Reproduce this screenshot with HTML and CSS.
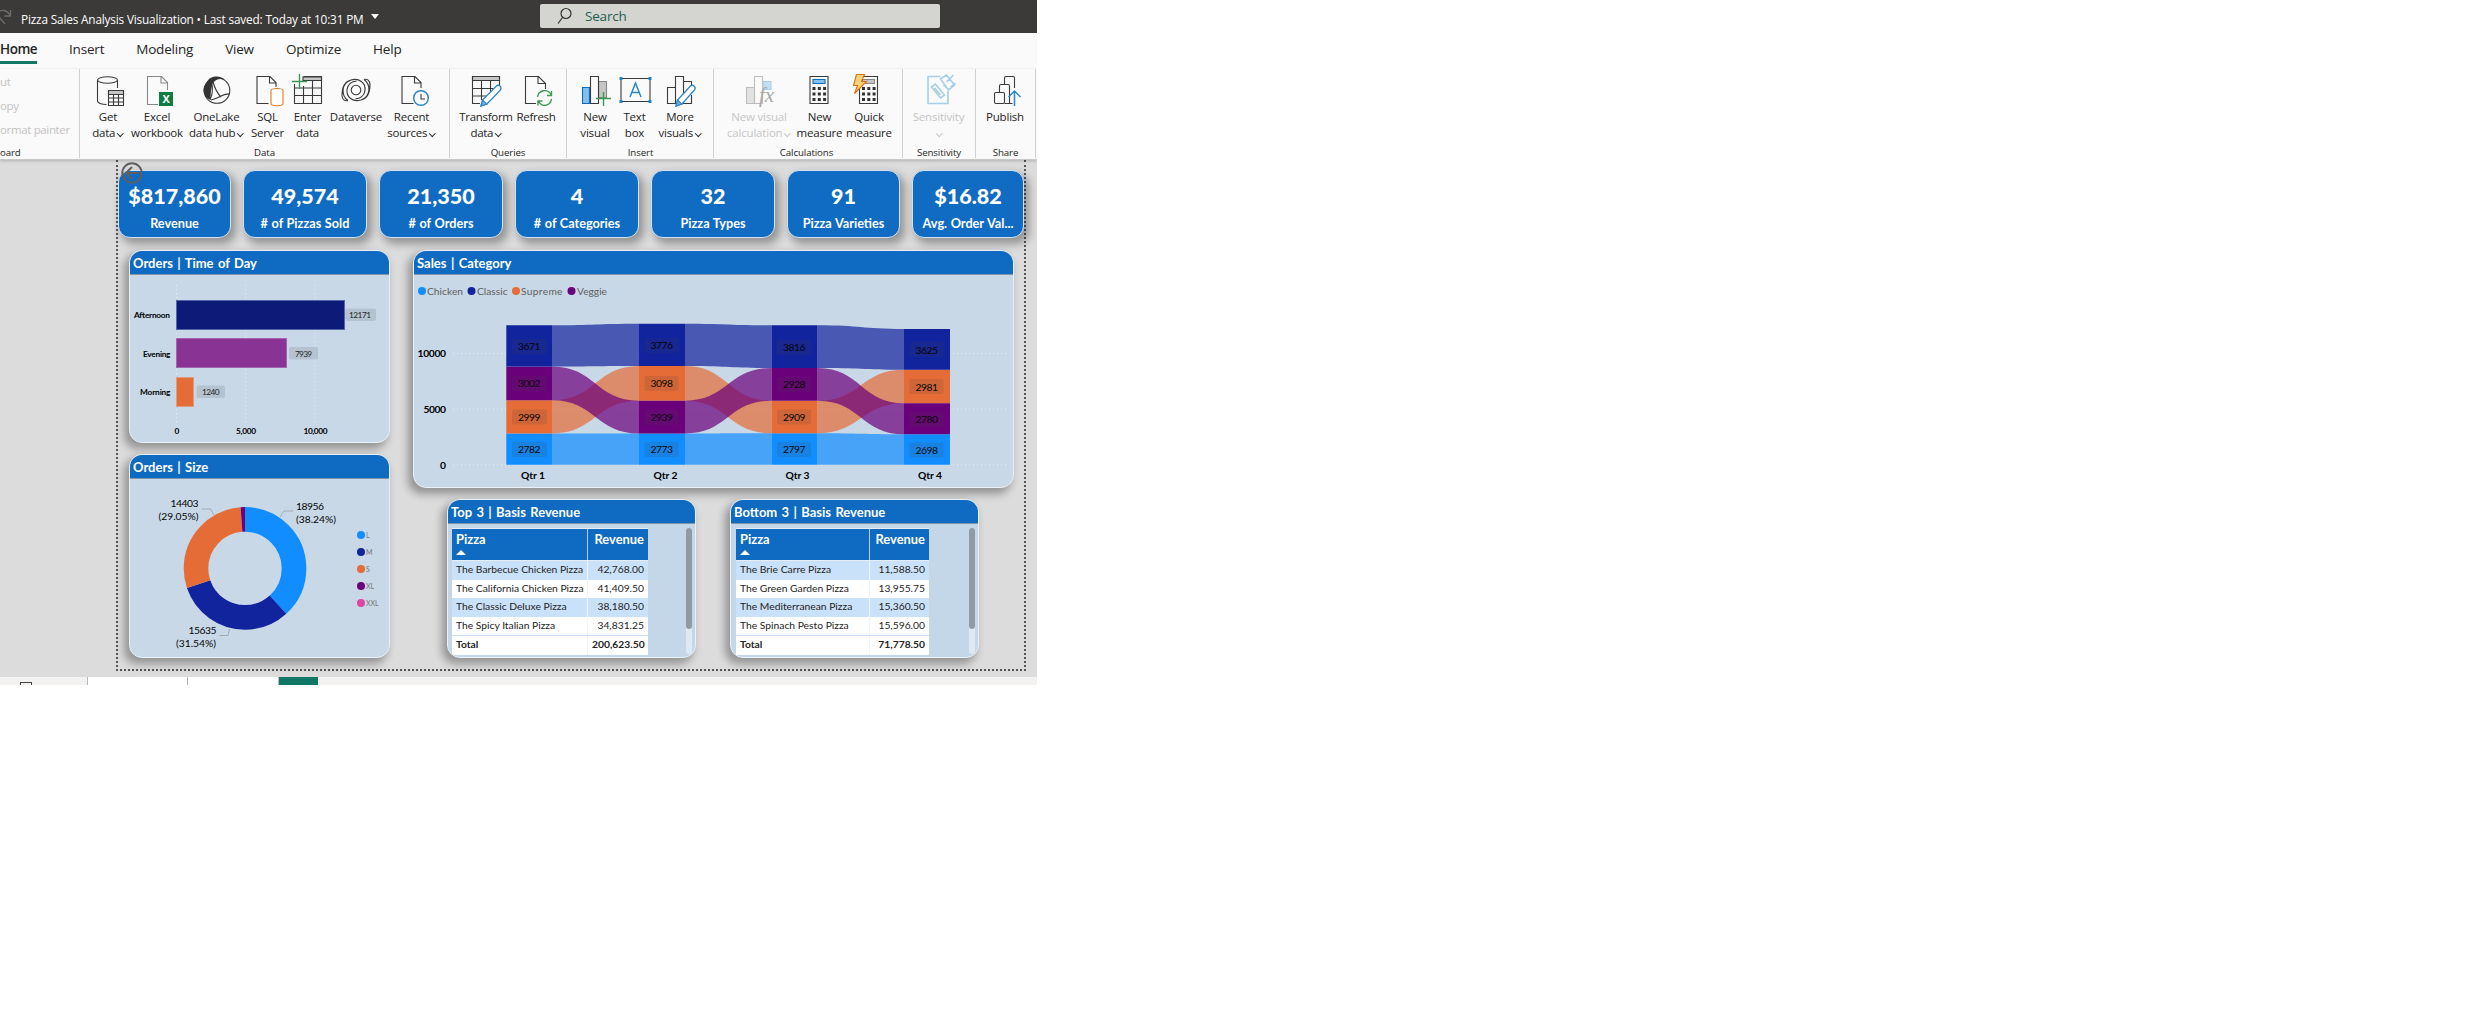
FILE: index.html
```html
<!DOCTYPE html>
<html lang="en">
<head>
<meta charset="utf-8">
<title>Pizza Sales Analysis Visualization</title>
<link rel="stylesheet" href="styles.css">
</head>
<body>
<div class="app">
  <header class="titlebar">
    <svg class="redo" width="12" height="18" viewBox="0 7 12 18"><path d="M10.500 10v6h-6M10 15C7 10 2 9 -2 12M-1 17l6 7"/></svg>
    <span class="doc">Pizza Sales Analysis Visualization • Last saved: Today at 10:31 PM</span>
    <i class="caret"></i>
    <div class="search">
      <svg width="16" height="18" viewBox="0 0 16 18"><circle cx="9" cy="6.500" r="5"/><path d="M5.500 10.500L1 16.500"/></svg>
      <span>Search</span>
    </div>
  </header>

  <nav class="tabs">
    <span class="tab active">Home</span><span class="tab">Insert</span><span class="tab">Modeling</span><span class="tab">View</span><span class="tab">Optimize</span><span class="tab">Help</span>
  </nav>

  <div class="ribbon">
    <section class="group clip">
      <div class="clip-items"><span>ut</span><span>opy</span><span>ormat painter</span></div>
      <div class="gname">oard</div>
    </section>

    <section class="group data">
      <div class="btns">
        <div class="btn w40"><svg viewBox="93 75 30 32"><ellipse cx="107.500" cy="80" rx="10" ry="3.300"/><path d="M97.500 80v21c0 2 4 3.500 9 3.500M117.500 80v8"/><path class="fg" d="M108.500 90.500h15v4h-15z"/><path d="M108.500 90.500h15v15h-15zM108.500 94.500h15M108.500 98h15M108.500 102h15M113.500 94.500v11M118.500 94.500v11"/></svg><span>Get</span><span>data<b class="chev"></b></span></div>
        <div class="btn w58"><svg viewBox="142 75 30 32"><path class="lt" d="M158 104.500h-10.500v-28h14l6 6V90M161 76.500v6.500h6.500"/><path class="xl" d="M159 92h14v14h-14z"/><text class="xt" x="166" y="103">X</text></svg><span>Excel</span><span>workbook</span></div>
        <div class="btn w61"><svg viewBox="202 75 30 32"><circle cx="217" cy="90.500" r="12.800"/><path class="dk" d="M207 82c3-7 14-7 18-2-5-2-9-1-12 3-2 5-3 12-2 17-8-3-10-11-4-18z"/><path d="M213 82c2 7 4 11 8 15M211 100c8-1 11-7 19-6M210 99c2-2 3-10 2-14" /></svg><span>OneLake</span><span>data hub<b class="chev"></b></span></div>
        <div class="btn w41"><svg viewBox="253.500 75 30 32"><path d="M269 103.500h-11.500v-27h13l6 6V87M270 76.500v6.500h6.500"/><g class="or"><ellipse cx="277.500" cy="90.500" rx="6" ry="2"/><path d="M271.500 90.500v13c0 3 12 3 12 0v-13"/></g></svg><span>SQL</span><span>Server</span></div>
        <div class="btn w39"><svg viewBox="293 75 30 32"><path class="fg" d="M303 77h18.500v3.500H303z"/><path d="M303.500 76.500h18v27h-27V84M303.500 80.500h18M294.500 88h27M294.500 95.500h27M303.500 86v17M312.500 81v22" /><path class="gr" d="M299.500 74v15M292 81.500h15"/></svg><span>Enter</span><span>data</span></div>
        <div class="btn w58"><svg viewBox="342 75 30 32"><circle cx="357" cy="90" r="4.800"/><path d="M349 100.500c-7-5-7-17 3-20.500 8-2.500 15 3 14 10.500-.6 5-5 8.500-9.500 8.300M365 79.500c7 5 7 17-3 20.500-8 2.500-15-3-14-10.500.6-5 5-8.500 9.500-8.300M349 100.500c-3 1-6-1-6-5 0-8 2-14 9-15.500M365 79.500c3-1 6 1 6 5 0 8-2 14-9 15.500"/></svg><span>Dataverse</span></div>
        <div class="btn w53"><svg viewBox="397.500 75 30 32"><path d="M414 103.500h-11.500v-27h13l6 6V88M415 76.500v6.500h6.500"/><circle class="bl" cx="421.500" cy="98" r="7.300"/><path d="M421.500 94v5h4"/></svg><span>Recent</span><span>sources<b class="chev"></b></span></div>
      </div>
      <div class="gname">Data</div>
    </section>

    <section class="group queries">
      <div class="btns">
        <div class="btn w56"><svg viewBox="471 75 30 32"><path class="fg" d="M472.500 76.500h27v4h-27z"/><path d="M480 103.500h-7.500v-27h27V85M472.500 80.500h27M472.500 88.500h21M472.500 96h14M481.500 80v20M490.500 80v12"/><path class="pen" d="M481 106l1.500-6L496 86.500c3-3 7 1 4 4L487 104z"/><path class="pt" d="M481 106l1.500-6 4.500 4z"/></svg><span>Transform</span><span>data<b class="chev"></b></span></div>
        <div class="btn w44"><svg viewBox="521 75 30 32"><path d="M536 103.500h-10.500v-27h13l7 7V89M538 76.500v7h7.500"/><path class="gr" d="M537.500 97c1-7 10-9 14-2M551.500 91v4.500H547M551.500 99c-1 7-10 9-13 2M538 105.500V101h4.500"/></svg><span>Refresh</span></div>
      </div>
      <div class="gname">Queries</div>
    </section>

    <section class="group insert">
      <div class="btns">
        <div class="btn w38"><svg viewBox="580 75 30 32"><path class="fb" d="M582.500 87.500h7v16h-7z"/><path class="fg lt" d="M598.500 81.500h8v16h-8z"/><path class="wh" d="M590.500 76.500h8v27h-8z"/><path class="gr" d="M603.500 92v14M596 98.500h15"/></svg><span>New</span><span>visual</span></div>
        <div class="btn w41"><svg viewBox="619.500 75 30 32"><path d="M620.500 78.500h29v23h-29z"/><path class="bd" d="M619 77h3v3h-3zM648 77h3v3h-3zM619 100h3v3h-3zM648 100h3v3h-3z"/><path class="bl" d="M629.500 97l5.500-14 5.500 14M631.500 92.500h7"/></svg><span>Text</span><span>box</span></div>
        <div class="btn w50"><svg viewBox="665 75 30 32"><path d="M667.500 87.500h8v16h-8zM683.500 81.500h8V87M675.500 76.500h8v27h-8zM691.500 95v8.500h-8"/><path class="pen" d="M676 106l1.500-6L690 86.500c3-3 7 1 4 4L682 104z"/><path class="pt" d="M676 106l1.500-6 4.500 4z"/></svg><span>More</span><span>visuals<b class="chev"></b></span></div>
      </div>
      <div class="gname">Insert</div>
    </section>

    <section class="group calc">
      <div class="btns">
        <div class="btn w70 off"><svg viewBox="744 75 30 32"><path class="fg" d="M746.500 87.500h8v16h-8z"/><path d="M754.500 76.500h8v27h-8z"/><path class="fo" d="M763 81.500h8v8h-8z"/><text class="fx" x="759" y="102">fx</text></svg><span>New visual</span><span>calculation<b class="chev"></b></span></div>
        <div class="btn w51"><svg viewBox="804.500 75 30 32"><path d="M809.500 76.500h18v27h-18z"/><path class="fb" d="M812.500 79.500h12v4h-12z"/><path class="dots" d="M812 88.500h14M812 94h14M812 99.500h14"/></svg><span>New</span><span>measure</span></div>
        <div class="btn w48"><svg viewBox="854 75 30 32"><path d="M859.500 76.500h18v27h-18z"/><path class="fg lt" d="M862.500 79.500h12v4h-12z"/><path class="dots" d="M862 88.500h14M862 94h14M862 99.500h14"/><path class="bolt" d="M856.500 74.500h8l-3 7h5l-12 12 3-8h-4z"/></svg><span>Quick</span><span>measure</span></div>
      </div>
      <div class="gname">Calculations</div>
    </section>

    <section class="group sens">
      <div class="btns">
        <div class="btn w61 off"><svg viewBox="923.500 75 30 32"><g class="ob"><path d="M940 76.500h-12.500v27h20V91"/><path d="M931 87l4-3 9 11-4 3zM934 88l6 7M940 79l6-4 8 10-6 5zM946 82l7-7M950 87l5-4M943 85l6 5"/></g></svg><span>Sensitivity</span><span><b class="chev"></b></span></div>
      </div>
      <div class="gname">Sensitivity</div>
    </section>

    <section class="group share">
      <div class="btns">
        <div class="btn w50"><svg viewBox="990 75 30 32"><rect x="994.500" y="92.500" width="10" height="11" rx="1.500"/><path d="M999.500 92V86q0-1.500 1.500-1.500h7q1.500 0 1.500 1.500v6M1004.500 84V78q0-1.500 1.500-1.500h7q1.500 0 1.500 1.500v10M1004.500 103.500h8M1009.500 92v11"/><path class="bl" d="M1014.500 106V91M1008.500 97l6-6 6 6"/></svg><span>Publish</span></div>
      </div>
      <div class="gname">Share</div>
    </section>
  </div>

  <main class="canvas">
    <div class="report">
      <svg class="back" width="22" height="22" viewBox="0 0 22 22"><circle cx="11" cy="11" r="9.700"/><path d="M18 11H5M11 5l-6 6 6 6"/></svg>
      <div class="kpis">
        <div class="kpi"><strong>$817,860</strong><span>Revenue</span></div>
        <div class="kpi"><strong>49,574</strong><span># of Pizzas Sold</span></div>
        <div class="kpi"><strong>21,350</strong><span># of Orders</span></div>
        <div class="kpi"><strong>4</strong><span># of Categories</span></div>
        <div class="kpi"><strong>32</strong><span>Pizza Types</span></div>
        <div class="kpi"><strong>91</strong><span>Pizza Varieties</span></div>
        <div class="kpi"><strong>$16.82</strong><span>Avg. Order Val...</span></div>
      </div>

      <div class="panels">
        <div class="col-left">
          <section class="panel time">
            <h2>Orders | Time of Day</h2>
            <svg class="chart" width="259" height="166" viewBox="130 275 259 166">
              <path class="grid" d="M176.500 285v140M245.500 285v140M315 285v140"/>
              <rect class="c-after" x="176.500" y="300.500" width="168" height="29"/>
              <rect class="c-eve" x="176.500" y="338.500" width="110" height="29"/>
              <rect class="c-morn" x="176.500" y="377.500" width="17" height="29"/>
              <g class="pill"><rect x="345" y="308.500" width="31" height="12.500" rx="2"/><rect x="289" y="347" width="29" height="12.500" rx="2"/><rect x="196.500" y="385.500" width="28.500" height="12.500" rx="2"/></g>
              <g class="t8"><text x="349" y="318" textLength="22">12171</text><text x="295" y="356.500" textLength="17">7939</text><text x="202" y="395" textLength="17.500">1240</text></g>
              <g class="t8 b"><text x="134" y="318" textLength="36">Afternoon</text><text x="143" y="356.500" textLength="27.500">Evening</text><text x="140" y="395" textLength="30.500">Morning</text>
              <text x="174.500" y="434">0</text><text x="236" y="434" textLength="20">5,000</text><text x="303.500" y="434" textLength="24">10,000</text></g>
            </svg>
          </section>
          <section class="panel size">
            <h2>Orders | Size</h2>
            <svg class="chart" width="259" height="177" viewBox="130 479 259 177">
              <g class="ring" transform="rotate(-90 245 568.400)">
                <circle cx="245" cy="568.400" r="49" pathLength="100" stroke="#118dff" stroke-dasharray="38.240 100"/>
                <circle cx="245" cy="568.400" r="49" pathLength="100" stroke="#12239e" stroke-dasharray="31.540 100" stroke-dashoffset="-38.240"/>
                <circle cx="245" cy="568.400" r="49" pathLength="100" stroke="#e66c37" stroke-dasharray="29.050 100" stroke-dashoffset="-69.780"/>
                <circle cx="245" cy="568.400" r="49" pathLength="100" stroke="#6b007b" stroke-dasharray="1.170 100" stroke-dashoffset="-98.830"/>
              </g>
              <path class="lead" d="M201.500 509h9l3.500 6M280 517l4-6h9M219.500 635.500h8.500l1.500-6.500"/>
              <g class="t11"><text x="170.500" y="506.500" textLength="28">14403</text><text x="158.500" y="520" textLength="40">(29.05%)</text><text x="296" y="509.500" textLength="28">18956</text><text x="296" y="522.500" textLength="40">(38.24%)</text><text x="188.500" y="633.500" textLength="28">15635</text><text x="176" y="646.500" textLength="40">(31.54%)</text></g>
              <g><circle cx="361" cy="535" r="4" fill="#118dff"/><circle cx="361" cy="552" r="4" fill="#12239e"/><circle cx="361" cy="569" r="4" fill="#e66c37"/><circle cx="361" cy="586" r="4" fill="#6b007b"/><circle cx="361" cy="603" r="4" fill="#e044a7"/></g>
              <g class="t7"><text x="366" y="538">L</text><text x="366" y="555">M</text><text x="366" y="572">S</text><text x="366" y="589">XL</text><text x="366" y="606">XXL</text></g>
            </svg>
          </section>
        </div>

        <div class="col-right">
          <section class="panel sales">
            <h2>Sales | Category</h2>
            <svg class="chart" width="599" height="211" viewBox="414 275 599 211">
              <path class="grid" d="M453 353.500h554M453 409h554M453 464.800h554"/>
              <g class="leg"><circle cx="422" cy="291" r="4" fill="#118dff"/><text x="427" y="295" textLength="36">Chicken</text><circle cx="471.500" cy="291" r="4" fill="#12239e"/><text x="477" y="295" textLength="30.500">Classic</text><circle cx="516" cy="291" r="4" fill="#e66c37"/><text x="521" y="295" textLength="41.500">Supreme</text><circle cx="571.500" cy="291" r="4" fill="#6b007b"/><text x="577" y="295" textLength="30">Veggie</text></g>
              <g opacity=".7" fill="#118dff">
                <path d="M552 433.400C595.500 433.400 595.500 433.500 639 433.500V464.700H552z"/>
                <path d="M685 433.500C728 433.500 728 433.300 771.500 433.300V464.700H685z"/>
                <path d="M817.500 433.300C861 433.300 861 434.300 904 434.300V464.700H817.500z"/>
              </g>
              <g opacity=".7" fill="#e66c37">
                <path d="M552 400.200C595.500 400.200 595.500 366 639 366V400.700C595.500 400.700 595.500 433.400 552 433.400z"/>
                <path d="M685 366C728 366 728 400.700 771.500 400.700V433.300C728 433.300 728 400.700 685 400.700z"/>
                <path d="M817.500 400.700C861 400.700 861 369.700 904 369.700V403.300C861 403.300 861 433.300 817.500 433.300z"/>
              </g>
              <g opacity=".7" fill="#6b007b">
                <path d="M552 366.500C595.500 366.500 595.500 400.700 639 400.700V433.500C595.500 433.500 595.500 400.200 552 400.200z"/>
                <path d="M685 400.700C728 400.700 728 368 771.500 368V400.700C728 400.700 728 433.500 685 433.500z"/>
                <path d="M817.500 368C861 368 861 403.300 904 403.300V434.300C861 434.300 861 400.700 817.500 400.700z"/>
              </g>
              <g opacity=".7" fill="#12239e">
                <path d="M552 325.300C595.500 325.300 595.500 323.700 639 323.700V366C595.500 366 595.500 366.500 552 366.500z"/>
                <path d="M685 323.700C728 323.700 728 325.300 771.500 325.300V368C728 368 728 366 685 366z"/>
                <path d="M817.500 325.300C861 325.300 861 329 904 329V369.700C861 369.700 861 368 817.500 368z"/>
              </g>
              <g fill="#118dff"><path d="M506.300 433.400H552V464.700H506.300zM639 433.500H685V464.700H639zM771.500 433.300H817.500V464.700H771.500zM904 434.300H950V464.700H904z"/></g>
              <g fill="#e66c37"><path d="M506.300 400.200H552V433.400H506.300zM639 366H685V400.700H639zM771.500 400.700H817.500V433.300H771.500zM904 369.700H950V403.300H904z"/></g>
              <g fill="#6b007b"><path d="M506.300 366.500H552V400.200H506.300zM639 400.700H685V433.500H639zM771.500 368H817.500V400.700H771.500zM904 403.300H950V434.300H904z"/></g>
              <g fill="#12239e"><path d="M506.300 325.300H552V366.500H506.300zM639 323.700H685V366H639zM771.500 325.300H817.500V368H771.500zM904 329H950V369.700H904z"/></g>
              <g class="tag">
                <rect x="512" y="339" width="35" height="15" rx="2"/><rect x="512" y="376" width="35" height="15" rx="2"/><rect x="512" y="409.500" width="35" height="15" rx="2"/><rect x="512" y="442" width="35" height="15" rx="2"/>
                <rect x="644.500" y="338" width="34" height="15" rx="2"/><rect x="644.500" y="376" width="34" height="15" rx="2"/><rect x="644.500" y="410" width="34" height="15" rx="2"/><rect x="644.500" y="442" width="34" height="15" rx="2"/>
                <rect x="777" y="340" width="34" height="15" rx="2"/><rect x="777" y="377" width="34" height="15" rx="2"/><rect x="777" y="409.500" width="34" height="15" rx="2"/><rect x="777" y="442" width="34" height="15" rx="2"/>
                <rect x="909.500" y="342" width="34" height="15" rx="2"/><rect x="909.500" y="379" width="34" height="15" rx="2"/><rect x="909.500" y="412" width="34" height="15" rx="2"/><rect x="909.500" y="442.500" width="34" height="15" rx="2"/>
              </g>
              <g class="t11">
                <text x="518" y="350" textLength="22.500">3671</text><text x="518" y="387" textLength="22.500">3002</text><text x="518" y="421" textLength="22.500">2999</text><text x="518" y="453" textLength="22.500">2782</text>
                <text x="650.500" y="349" textLength="22.500">3776</text><text x="650.500" y="387" textLength="22.500">3098</text><text x="650.500" y="421" textLength="22.500">2939</text><text x="650.500" y="453" textLength="22.500">2773</text>
                <text x="783" y="351" textLength="22.500">3816</text><text x="783" y="388" textLength="22.500">2928</text><text x="783" y="421" textLength="22.500">2909</text><text x="783" y="453" textLength="22.500">2797</text>
                <text x="915.500" y="354" textLength="22.500">3625</text><text x="915.500" y="391" textLength="22.500">2981</text><text x="915.500" y="423" textLength="22.500">2780</text><text x="915.500" y="454" textLength="22.500">2698</text>
              </g>
              <g class="t11 b">
                <text x="417.500" y="357" textLength="28.500">10000</text><text x="423.500" y="413" textLength="22.500">5000</text><text x="440" y="469">0</text>
                <text x="521" y="479" textLength="24">Qtr 1</text><text x="653.500" y="479" textLength="24">Qtr 2</text><text x="785.500" y="479" textLength="24">Qtr 3</text><text x="918" y="479" textLength="24">Qtr 4</text>
              </g>
            </svg>
          </section>

          <div class="tables">
            <section class="panel tbl">
              <h2>Top 3 | Basis Revenue</h2>
              <div class="tbody">
                <div class="table top">
                  <div class="row head"><span>Pizza<i class="sort"></i></span><span>Revenue</span></div>
                  <div class="row alt"><span>The Barbecue Chicken Pizza</span><span>42,768.00</span></div>
                  <div class="row"><span>The California Chicken Pizza</span><span>41,409.50</span></div>
                  <div class="row alt"><span>The Classic Deluxe Pizza</span><span>38,180.50</span></div>
                  <div class="row"><span>The Spicy Italian Pizza</span><span>34,831.25</span></div>
                  <div class="row total"><span>Total</span><span>200,623.50</span></div>
                </div>
                <div class="scroll"><div class="thumb"></div></div>
              </div>
            </section>
            <section class="panel tbl">
              <h2>Bottom 3 | Basis Revenue</h2>
              <div class="tbody">
                <div class="table bottom">
                  <div class="row head"><span>Pizza<i class="sort"></i></span><span>Revenue</span></div>
                  <div class="row alt"><span>The Brie Carre Pizza</span><span>11,588.50</span></div>
                  <div class="row"><span>The Green Garden Pizza</span><span>13,955.75</span></div>
                  <div class="row alt"><span>The Mediterranean Pizza</span><span>15,360.50</span></div>
                  <div class="row"><span>The Spinach Pesto Pizza</span><span>15,596.00</span></div>
                  <div class="row total"><span>Total</span><span>71,778.50</span></div>
                </div>
                <div class="scroll"><div class="thumb"></div></div>
              </div>
            </section>
          </div>
        </div>
      </div>
    </div>
  </main>

  <footer class="pages"><div class="view"><i></i></div><div class="page p1"></div><div class="page p2"></div><div class="add"></div></footer>
</div>
</body>
</html>
```
FILE: styles.css
```css
* { box-sizing: border-box; }
body { margin: 0; background: #fff; }
.app { width: 1037px; height: 685px; overflow: hidden; display: flex; flex-direction: column; font-family: "Open Sans", "Noto Sans", sans-serif; color: #252423; }

/* title bar */
.titlebar { height: 33px; flex: none; background: #3b3a38; display: flex; align-items: flex-start; color: #fff; }
.redo { margin-top: 7px; fill: none; stroke: #6f6e6c; stroke-width: 1.3; }
.doc { margin: 10px 0 0 9px; width: 342px; font-size: 11.8px; line-height: 18px; letter-spacing: -.17px; white-space: nowrap; }
.caret { margin: 14px 0 0 8px; border: 4px solid transparent; border-top: 5px solid #fff; border-bottom: 0; }
.search { margin: 4px 0 0 161px; width: 400px; height: 24px; background: #d4d4d1; border-radius: 2px; display: flex; align-items: center; padding-left: 17px; gap: 12px; color: #1e5e50; font-size: 13.5px; letter-spacing: -.2px; }
.search svg { fill: none; stroke: #333; stroke-width: 1.2; }

/* ribbon tabs */
.tabs { height: 36px; flex: none; background: #fafafa; display: flex; gap: 32px; padding-left: 1px; font-size: 13.5px; line-height: 33px; letter-spacing: -.2px; }
.tab { height: 31px; white-space: nowrap; }
.active { font-weight: 600; border-bottom: 3px solid #117865; margin-left: -1px; padding-left: 0; letter-spacing: -.5px; }

/* ribbon */
.ribbon { height: 91px; flex: none; background: #fafafa; border-bottom: 1px solid #c8c8c8; display: flex; font-size: 11.5px; letter-spacing: -.2px; position: relative; z-index: 1; box-shadow: 0 1px 3px rgba(0,0,0,.2); }
.group { height: 89px; border-right: 1px solid #d0d0d0; display: flex; flex-direction: column; justify-content: space-between; }
.clip { width: 80px; }
.data { width: 370px; padding-left: 8px; }
.queries { width: 117px; padding-left: 8px; }
.insert { width: 147px; padding-left: 9px; }
.calc { width: 189px; padding-left: 10px; }
.sens { width: 73px; padding-left: 5px; }
.share { width: 60px; padding-left: 4px; }
.gname { font-size: 9.7px; line-height: 10px; text-align: center; letter-spacing: -.1px; }
.data .gname, .queries .gname, .insert .gname { margin-left: -8px; }
.calc .gname { margin-left: -13px; }
.sens .gname { margin-left: -5px; }
.share .gname { margin-left: -4px; }
.clip .gname { text-align: left; }
.clip-items { display: flex; flex-direction: column; color: #c3c3c3; line-height: 24px; padding-top: 1px; letter-spacing: -.35px; }
.btns { display: flex; padding-top: 6px; }
.btn { display: flex; flex-direction: column; align-items: center; white-space: nowrap; line-height: 16px; }
.btn svg { width: 30px; height: 32px; margin-bottom: 2px; overflow: visible; fill: none; stroke: #3a3a3a; stroke-width: 1.1; }
.btn span { height: 16px; }
.w38 { width: 38px; } .w39 { width: 39px; } .w40 { width: 40px; } .w41 { width: 41px; } .w44 { width: 44px; } .w48 { width: 48px; } .w50 { width: 50px; } .w51 { width: 51px; } .w53 { width: 53px; } .w56 { width: 56px; } .w58 { width: 58px; } .w61 { width: 61px; } .w70 { width: 70px; }
.w56, .w44 { letter-spacing: -.3px; }
.chev { display: inline-block; width: 4.5px; height: 4.5px; border: solid currentColor; border-width: 0 1.4px 1.4px 0; transform: rotate(45deg); margin: 0 1px 2px 3px; }
.off { color: #c6c6c6; }
.btn.off svg { stroke: #bdbdbd; }
.btn .fg { fill: #c8c6c4; }
.off .fg { fill: #e4e2e0; }
.btn .lt { stroke: #888; }
.btn .xl { fill: #107c41; stroke: none; }
.btn .xt { fill: #fff; stroke: none; font: bold 11px "Open Sans", sans-serif; text-anchor: middle; }
.btn .dk { fill: #333; stroke: none; }
.btn .or { stroke: #e07b20; fill: #fff; }
.btn .gr { stroke: #3a9a55; stroke-width: 1.4; }
.btn .bl { stroke: #2b88c8; stroke-width: 1.5; }
.btn .pen { stroke: #2b88c8; fill: #fff; stroke-width: 1.3; }
.btn .pt { fill: #6fb1e4; stroke: #2b88c8; }
.btn .fb { fill: #83beec; stroke: #0f6cbd; }
.btn .fo { fill: #c5dff2; stroke: #a8cfe8; }
.btn .bd { fill: #1a86d0; stroke: none; }
.btn .wh { fill: #fafafa; }
.btn .dots { stroke: #333; stroke-width: 3; stroke-dasharray: 3 2.3; }
.btn .bolt { fill: #fdd07a; stroke: #d8720c; }
.btn .fx { fill: #a8a8a8; stroke: none; font: italic 21px "Liberation Serif", serif; letter-spacing: 0; }
.btn .ob { stroke: #a6cfe6; stroke-width: 1.6; }

/* report canvas */
.canvas { height: 517px; flex: none; background: #dcdcdc; padding: 0 0 0 116px; }
.report { width: 910px; height: 511px; border: 2px dotted #555; border-top: 0; position: relative; font-family: Lato, "Open Sans", sans-serif; }
.back { position: absolute; left: 3px; top: 2px; fill: none; stroke: #605e5c; stroke-width: 2; z-index: 2; }
.kpis { display: grid; grid-template-columns: 113px repeat(3, 124px) 124px 113px 112px; justify-content: space-between; padding-top: 10px; }
.kpi { height: 68px; background: #106cc3; border: 1px solid #d3e2f1; border-radius: 12px; box-shadow: 4px 5px 8px 1px rgba(0,0,0,.33); color: #fff; font-weight: 700; display: flex; flex-direction: column; align-items: center; white-space: nowrap; }
.kpi strong { font-size: 21.5px; line-height: 26px; margin-top: 12px; }
.kpi span { font-size: 12.7px; line-height: 18px; margin-top: 5px; word-spacing: .5px; }

.panels { display: flex; gap: 23px; padding: 12px 0 0 11px; }
.col-left { width: 261px; display: flex; flex-direction: column; gap: 11px; }
.col-right { width: 601px; display: flex; flex-direction: column; gap: 11px; }
.panel { background: #c8d8e7; border: 1px solid #e9f0f7; border-radius: 13px; box-shadow: -4px 5px 8px 1px rgba(0,0,0,.33); overflow: hidden; }
.panel h2 { margin: 0; height: 24px; padding-left: 3px; background: #0f6bc1; border-bottom: 1px solid #7f95ab; color: #fff; font-size: 13px; line-height: 25px; font-weight: 700; white-space: nowrap; word-spacing: 1.2px; }
.time { height: 193px; }
.size { height: 204px; }
.sales { height: 238px; }
.chart { display: block; font-family: Lato, "Open Sans", sans-serif; }
.grid { stroke: #e6edf4; stroke-dasharray: 1 3; fill: none; }
.c-after { fill: #0e1a78; stroke: #5561a8; }
.c-eve { fill: #893395; stroke: #a565b2; }
.c-morn { fill: #e66c37; stroke: #e19a7d; }
.pill rect { fill: #b5c3d1; }
.t8 { font-size: 8.3px; fill: #252423; }
.t7 { font-size: 7px; fill: #777; }
.t11 { font-size: 10.3px; fill: #050505; }
.b { font-weight: 700; fill: #000; }
.leg { font-size: 10.2px; }
.leg text { fill: #605e5c; }
.ring { fill: none; stroke-width: 24.6; }
.lead { fill: none; stroke: #a3abb3; }
.tag rect { fill: #444; fill-opacity: .15; }

.tables { display: flex; gap: 34px; padding-left: 34px; }
.tbl { width: 249px; height: 159px; background: #c4d7e9; }
.tbody { display: flex; justify-content: space-between; padding: 4px 3px 0 4px; }
.table { width: 196px; font-size: 10.3px; color: #252423; }
.bottom { width: 193px; margin-left: 1px; }
.row { display: grid; grid-template-columns: 135px 1fr; height: 18.5px; line-height: 17px; background: #fff; white-space: nowrap; }
.bottom .row { grid-template-columns: 133px 1fr; }
.row span { padding: 0 4px; }
.row span + span { text-align: right; border-left: 1px solid #f0f5fa; }
.row.alt { background: #c9e1f9; }
.row.head { height: 33px; background: #0f6bc1; border: solid #e4edf6; border-width: 1px 0; color: #fff; font-weight: 700; font-size: 12.9px; line-height: 21px; }
.row.head span { display: flex; flex-direction: column; }
.row.head span + span { border-left-color: #b5d0ea; }
.sort { border: 5px solid transparent; border-bottom: 5px solid #fff; border-top: 0; width: 10px; margin-top: 0; }
.row.total { font-weight: 700; height: 19.500px; border-top: 1px solid #c9e1f9; }
.scroll { width: 6px; height: 126px; border-radius: 3px; background: #dfe9f3; }
.thumb { height: 101px; border-radius: 3px; background: #8f9aa5; }

/* page tabs strip */
.pages { height: 8px; flex: none; background: #f3f2f0; display: flex; }
.view { width: 87px; padding: 5px 0 0 20px; }
.view i { display: block; width: 12px; height: 6px; border: 1px solid #444; }
.page { border-left: 1px solid #b8b8b8; background: #fff; }
.p1 { width: 100px; }
.p2 { width: 92px; border-right: 1px solid #b8b8b8; }
.add { width: 39px; background: #117865; }
```
